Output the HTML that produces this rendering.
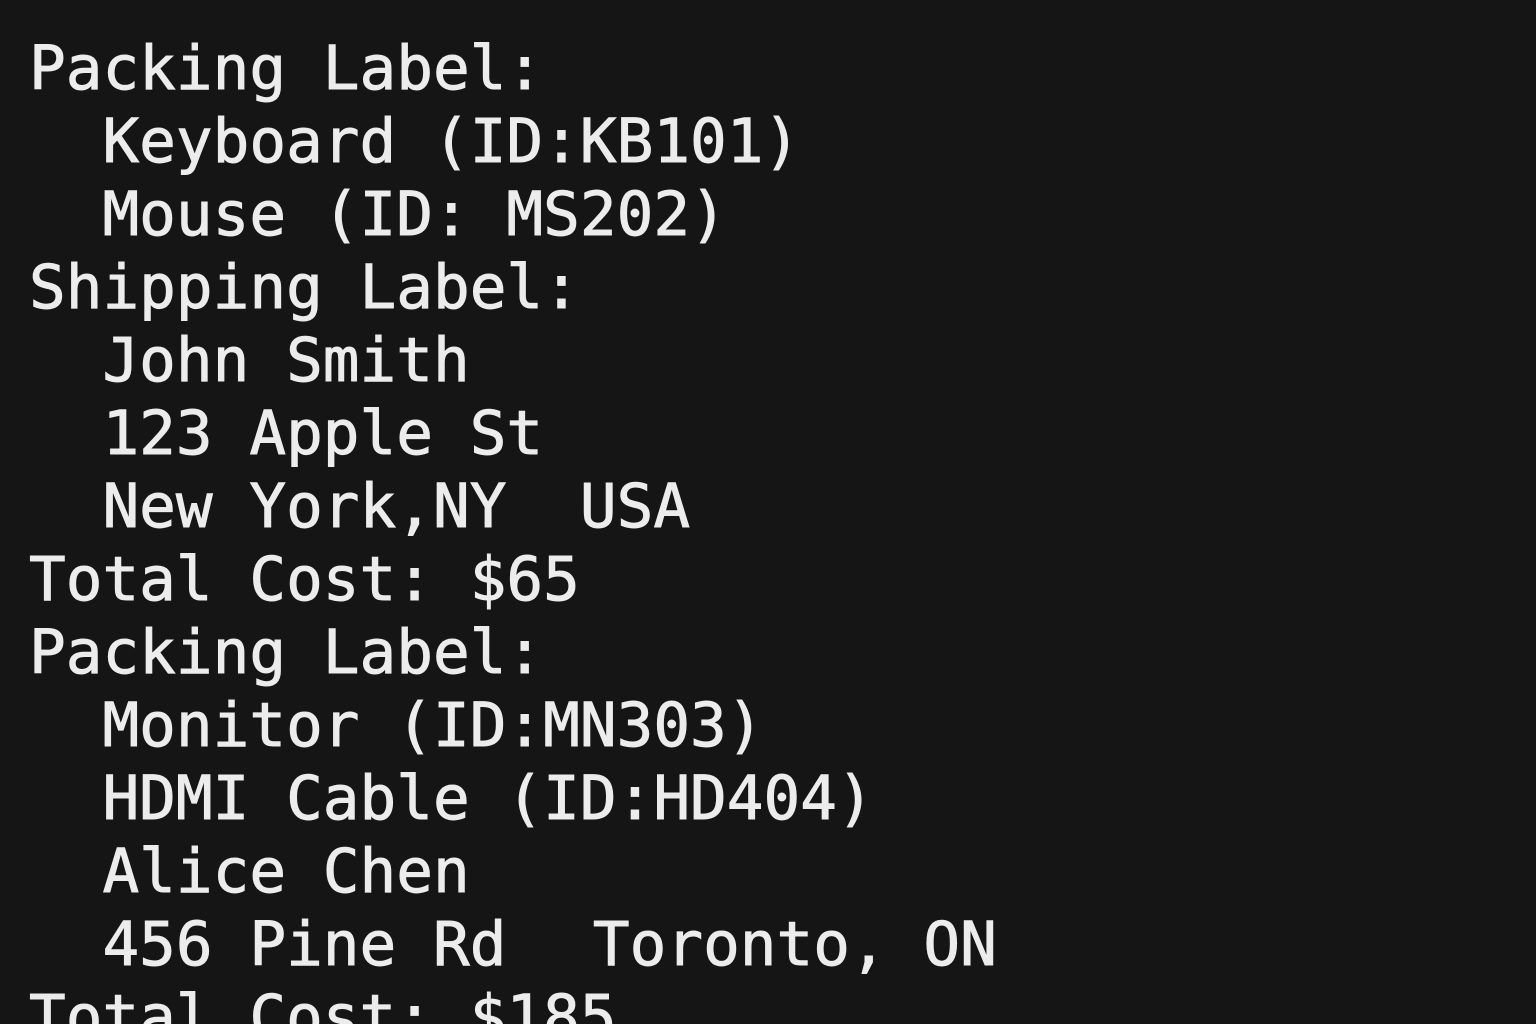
<!DOCTYPE html>
<html><head><meta charset="utf-8"><style>
html,body{margin:0;padding:0;background:#151515;width:1536px;height:1024px;overflow:hidden}
pre{margin:0;padding:32px 0 0 29px;font-family:"DejaVu Sans Mono","Liberation Mono",monospace;font-size:61px;line-height:73px;color:#ececec;white-space:pre;-webkit-text-stroke:0.9px #ececec}
</style></head><body><pre>Packing Label:
  Keyboard (ID:KB101)
  Mouse (ID: MS202)
Shipping Label:
  John Smith
  123 Apple St
  New York,NY  USA
Total Cost: $65
Packing Label:
  Monitor (ID:MN303)
  HDMI Cable (ID:HD404)
  Alice Chen
  456 Pine Rd  <span style="margin-left:13px">Toronto, ON</span>
Total Cost: $185</pre></body></html>
